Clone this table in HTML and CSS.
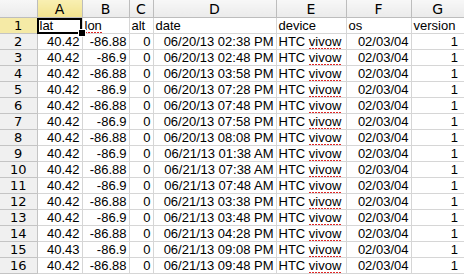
FILE: index.html
```html
<!DOCTYPE html>
<html>
<head>
<meta charset="utf-8">
<link rel="stylesheet" href="styles.css">
</head>
<body>
<table class="sheet">
<colgroup>
<col class="c-rh"><col class="c-a"><col class="c-b"><col class="c-c"><col class="c-d"><col class="c-e"><col class="c-f"><col class="c-g">
</colgroup>
<thead>
<tr class="colhead">
<th class="corner"></th><th class="sel">A</th><th>B</th><th>C</th><th>D</th><th>E</th><th>F</th><th>G</th>
</tr>
</thead>
<tbody>
<tr><th class="rh sel">1</th><td class="txt active">lat<span class="handle"></span></td><td class="txt"><span class="sp">lon</span></td><td class="txt">alt</td><td class="txt">date</td><td class="txt">device</td><td class="txt">os</td><td class="txt">version</td></tr>
<tr><th class="rh">2</th><td>40.42</td><td>-86.88</td><td>0</td><td>06/20/13 02:38 PM</td><td class="txt">HTC <span class="sp">vivow</span></td><td>02/03/04</td><td>1</td></tr>
<tr><th class="rh">3</th><td>40.42</td><td>-86.9</td><td>0</td><td>06/20/13 02:48 PM</td><td class="txt">HTC <span class="sp">vivow</span></td><td>02/03/04</td><td>1</td></tr>
<tr><th class="rh">4</th><td>40.42</td><td>-86.88</td><td>0</td><td>06/20/13 03:58 PM</td><td class="txt">HTC <span class="sp">vivow</span></td><td>02/03/04</td><td>1</td></tr>
<tr><th class="rh">5</th><td>40.42</td><td>-86.9</td><td>0</td><td>06/20/13 07:28 PM</td><td class="txt">HTC <span class="sp">vivow</span></td><td>02/03/04</td><td>1</td></tr>
<tr><th class="rh">6</th><td>40.42</td><td>-86.88</td><td>0</td><td>06/20/13 07:48 PM</td><td class="txt">HTC <span class="sp">vivow</span></td><td>02/03/04</td><td>1</td></tr>
<tr><th class="rh">7</th><td>40.42</td><td>-86.9</td><td>0</td><td>06/20/13 07:58 PM</td><td class="txt">HTC <span class="sp">vivow</span></td><td>02/03/04</td><td>1</td></tr>
<tr><th class="rh">8</th><td>40.42</td><td>-86.88</td><td>0</td><td>06/20/13 08:08 PM</td><td class="txt">HTC <span class="sp">vivow</span></td><td>02/03/04</td><td>1</td></tr>
<tr><th class="rh">9</th><td>40.42</td><td>-86.9</td><td>0</td><td>06/21/13 01:38 AM</td><td class="txt">HTC <span class="sp">vivow</span></td><td>02/03/04</td><td>1</td></tr>
<tr><th class="rh">10</th><td>40.42</td><td>-86.88</td><td>0</td><td>06/21/13 07:38 AM</td><td class="txt">HTC <span class="sp">vivow</span></td><td>02/03/04</td><td>1</td></tr>
<tr><th class="rh">11</th><td>40.42</td><td>-86.9</td><td>0</td><td>06/21/13 07:48 AM</td><td class="txt">HTC <span class="sp">vivow</span></td><td>02/03/04</td><td>1</td></tr>
<tr><th class="rh">12</th><td>40.42</td><td>-86.88</td><td>0</td><td>06/21/13 03:38 PM</td><td class="txt">HTC <span class="sp">vivow</span></td><td>02/03/04</td><td>1</td></tr>
<tr><th class="rh">13</th><td>40.42</td><td>-86.9</td><td>0</td><td>06/21/13 03:48 PM</td><td class="txt">HTC <span class="sp">vivow</span></td><td>02/03/04</td><td>1</td></tr>
<tr><th class="rh">14</th><td>40.42</td><td>-86.88</td><td>0</td><td>06/21/13 04:28 PM</td><td class="txt">HTC <span class="sp">vivow</span></td><td>02/03/04</td><td>1</td></tr>
<tr><th class="rh">15</th><td>40.43</td><td>-86.9</td><td>0</td><td>06/21/13 09:08 PM</td><td class="txt">HTC <span class="sp">vivow</span></td><td>02/03/04</td><td>1</td></tr>
<tr><th class="rh">16</th><td>40.42</td><td>-86.88</td><td>0</td><td>06/21/13 09:48 PM</td><td class="txt">HTC <span class="sp">vivow</span></td><td>02/03/04</td><td>1</td></tr>
</tbody>
</table>
</body>
</html>
```
FILE: styles.css
```css
html, body {
  margin: 0;
  padding: 0;
  background: #ffffff;
  overflow: hidden;
}
.sheet {
  border-collapse: collapse;
  table-layout: fixed;
  width: 464px;
  font-family: "Liberation Sans", Arial, sans-serif;
  font-size: 13px;
  color: #000;
}
.c-rh { width: 37px; }
.c-a { width: 45px; }
.c-b { width: 47px; }
.c-c { width: 24px; }
.c-d { width: 123px; }
.c-e { width: 70px; }
.c-f { width: 65px; }
.c-g { width: 53px; }

.colhead th {
  height: 17px;
  padding: 0;
  background: linear-gradient(#f7f7f7, #ebebeb);
  border: 1px solid #bdbdbd;
  border-top: none;
  font-family: "DejaVu Sans", sans-serif;
  font-weight: normal;
  font-size: 14px;
  text-align: center;
  color: #000;
}
.colhead th.corner { border-left: none; }
.colhead th:last-child { border-right: none; }
.colhead th.sel {
  background: linear-gradient(#f9efb2, #f1e38e);
}
th.rh {
  padding: 0;
  height: 15px;
  background: #f0f0f0;
  border: 1px solid #c4c4c4;
  border-left: none;
  font-family: "DejaVu Sans", sans-serif;
  font-weight: normal;
  font-size: 13px;
  text-align: center;
  color: #000;
}
th.rh.sel {
  background: #f5eaa6;
}
td {
  height: 15px;
  padding: 0 2px 0 2px;
  border: 1px solid #d6d6d6;
  text-align: right;
  white-space: nowrap;
  overflow: hidden;
  line-height: 15px;
}
td:last-child { border-right: none; padding-right: 6px; }
td.txt {
  text-align: left;
}
td.active {
  position: relative;
  overflow: visible;
  outline: 2px solid #000;
  outline-offset: -2px;
}
.handle {
  position: absolute;
  right: -4px;
  bottom: -4px;
  width: 6px;
  height: 6px;
  background: #000;
  border: 1px solid #fff;
}
.sp {
  display: inline-block;
  vertical-align: top;
  height: 15px;
  line-height: 15px;
  background-image: repeating-linear-gradient(90deg, #e02828 0 2px, transparent 2px 3px);
  background-size: 100% 1px;
  background-repeat: no-repeat;
  background-position: left bottom;
}
```
